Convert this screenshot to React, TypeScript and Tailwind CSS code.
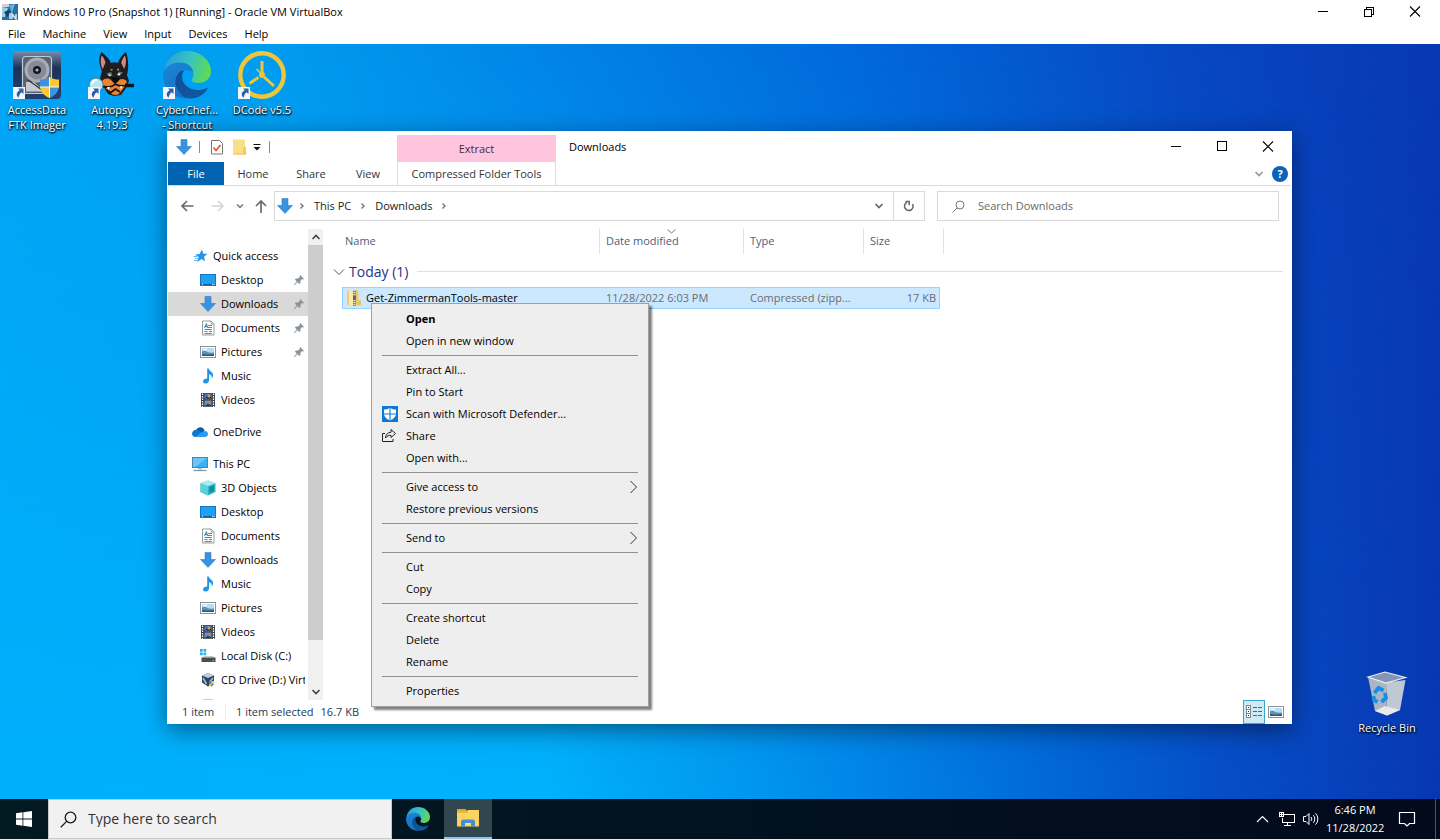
import type { ReactNode } from "react";

type IconProps = { className?: string };

/* ---------- window glyphs ---------- */

function Minimise() {
  return (
    <svg width="12" height="12" viewBox="0 0 12 12" shapeRendering="crispEdges"><path d="M1 5.500h10" stroke="#000" /></svg>
  );
}
function Restore() {
  return (
    <svg width="12" height="12" viewBox="0 0 12 12" fill="none" stroke="#000" shapeRendering="crispEdges">
      <path d="M1.500 3.500h7v7h-7zM3.500 3.500v-2h7v7h-2" />
    </svg>
  );
}
function Maximise() {
  return (
    <svg width="12" height="12" viewBox="0 0 12 12" fill="none" stroke="#000" shapeRendering="crispEdges"><path d="M1.500.500h9v9h-9z" /></svg>
  );
}
function Close() {
  return (
    <svg width="12" height="12" viewBox="0 0 12 12" fill="none" stroke="#000" strokeWidth="1.100"><path d="M1 .5l10 10M11 .5L1 10.500" /></svg>
  );
}
function Chevron({ className = "" }: IconProps) {
  return (
    <svg className={className} width="10" height="10" viewBox="0 0 10 10" fill="none" stroke="currentColor" strokeWidth="1.700"><path d="M1.500 3L5 6.500 8.500 3" /></svg>
  );
}
function Crumb() {
  return (
    <svg width="6" height="8" viewBox="0 0 6 8" fill="none" stroke="#777" strokeWidth="1.400"><path d="M1.500 1.500L4 4 1.500 6.500" /></svg>
  );
}

/* ---------- folder and drive icons ---------- */

function DownArrow() {
  return (
    <svg width="16" height="16" viewBox="0 0 16 16"><path d="M5 .5h6v7h4.500L8 15.500.5 7.500H5z" fill="#3a93e0" stroke="#2d7fc9" strokeWidth=".6" /></svg>
  );
}
function StarIcon() {
  return (
    <svg width="16" height="16" viewBox="0 0 16 16">
      <path d="M10 1.500l1.300 4.200 4.200.100-3.400 2.900 1 4.600L9.500 11 5.200 14l1.500-4.900L3 6.500l4.500-.4z" fill="#2593e6" />
      <path d="M1.500 8.500h4M3 10.500h3M2 12.500h4M4 6.500h3" stroke="#5cb3ee" strokeWidth=".9" />
    </svg>
  );
}
function DesktopIcon() {
  return (
    <svg width="16" height="16" viewBox="0 0 16 16">
      <rect x=".5" y="2.500" width="15" height="11" fill="#1ea0f6" stroke="#1278c4" />
      <path d="M1 12.500h14" stroke="#0b5c9e" />
      <path d="M2 12.500h1.500M12 12.500h2.500" stroke="#cdeafd" strokeDasharray="1 .5" />
    </svg>
  );
}
function DocIcon() {
  return (
    <svg width="16" height="16" viewBox="0 0 16 16">
      <path d="M2.500 1h8.500l3 3v11h-11.500z" fill="#fff" stroke="#8a9299" strokeWidth=".9" />
      <path d="M11 1v3h3" fill="none" stroke="#8a9299" strokeWidth=".8" />
      <path d="M8 5.500h4M8 7.500h4M4.500 9.500h7.500M4.500 11.500h3M9 11.500h3M4.500 13.500h7.500" stroke="#3a92c8" />
      <path d="M4.500 8l2-4.500 1 4.500M5 6.500h2" fill="none" stroke="#2a7fb5" />
    </svg>
  );
}
function PictureIcon() {
  return (
    <svg width="16" height="16" viewBox="0 0 16 16">
      <rect x=".5" y="2.500" width="15" height="11" fill="#fff" stroke="#8b9298" />
      <rect x="2" y="4" width="12" height="8" fill="#b9dcf3" />
      <path d="M2 7.500c2-1.800 3.500-.5 5 .3s4 1 7 .700V12H2z" fill="#5b93bb" />
      <path d="M2 10l5 .5 7-.5V12H2z" fill="#2f5f6d" />
      <path d="M3 5.500h4" stroke="#fff" strokeWidth="1.500" />
    </svg>
  );
}
function MusicIcon() {
  return (
    <svg width="16" height="16" viewBox="0 0 16 16">
      <path d="M7.200.5h1.600c.3 2.600 4 3.200 4.200 6.200.1 1.600-.5 2.900-1.300 3.700.3-2.200-.6-3.800-2.700-4.400v6.200c0 1.800-1.300 3.100-3.200 3.300-1.800.1-2.700-.7-2.700-1.900 0-1.700 1.500-3 4.100-3z" fill="#1c94e8" />
    </svg>
  );
}
function VideoIcon() {
  return (
    <svg width="16" height="16" viewBox="0 0 16 16">
      <rect x="1" y="1" width="14" height="14" fill="#3b4046" />
      <path d="M2.500 1.500v14M13.500 1.500v14" stroke="#fff" strokeWidth="1.300" strokeDasharray="1.400 1.100" />
      <rect x="4.500" y="1.500" width="7" height="6" fill="#4c76b8" />
      <rect x="4.500" y="8.500" width="7" height="6" fill="#6d8fc4" />
      <path d="M5 6.500l2.500-3 1.500 1.500 2-2v4z" fill="#323c52" />
      <circle cx="9" cy="4" r="1.500" fill="#e4a23a" />
      <path d="M5 14l3-3 3.500 3z" fill="#314036" /><circle cx="8.500" cy="10.500" r="1.300" fill="#d48b3a" />
    </svg>
  );
}
function CloudIcon() {
  return (
    <svg width="16" height="16" viewBox="0 0 16 16">
      <path d="M4.300 5.800a4.300 4.300 0 0 1 8.200 1.200L9 9.500 2.500 7z" fill="#0a5ea8" />
      <path d="M0 9.800C0 7.600 1.900 5.700 4.300 5.700c1.500 0 2.700.7 4.200 1.800L13 13H3.300C1.500 13 0 11.600 0 9.800z" fill="#1177d1" />
      <path d="M3 13l7.500-5.300c1-.6 1.800-.8 2.400-.7C14.700 7.100 16 8.400 16 10s-1.300 3-2.900 3z" fill="#2a9df0" />
    </svg>
  );
}
function ComputerIcon() {
  return (
    <svg width="16" height="16" viewBox="0 0 16 16">
      <rect x=".5" y="1.500" width="15" height="10" fill="#3bb0f2" stroke="#4b84a8" />
      <path d="M1 2h14L3 11H1z" fill="#7dd0fa" opacity=".7" />
      <path d="M6 12h4v1.500H6z" fill="#b5c3cc" /><path d="M1.500 14.500h13" stroke="#7795a8" strokeWidth="1.200" />
    </svg>
  );
}
function CubeIcon() {
  return (
    <svg width="16" height="16" viewBox="0 0 16 16">
      <path d="M8 .5l7.500 2.800V12L8 15.500.5 12V3.300z" fill="#2fb4c6" />
      <path d="M.5 3.300L8 6v9.500L.5 12z" fill="#5ad0da" /><path d="M8 .5l7.500 2.800L8 6 .5 3.300z" fill="#a8ecef" />
      <path d="M9.500 7l4.500-1.800v5.500L9.500 13z" fill="#148a9d" />
    </svg>
  );
}
function DiskIcon() {
  return (
    <svg width="16" height="16" viewBox="0 0 16 16">
      <path d="M0 1h2.700v2.700H0zM3.500 1h2.700v2.700H3.500zM0 4.500h2.700v2.700H0zM3.500 4.500h2.700v2.700H3.500z" fill="#25b4e8" />
      <path d="M2 9.500L4 8h9l2 1.500z" fill="#c5c9cc" /><rect x="1.500" y="9.500" width="14" height="4.500" fill="#4a4e52" />
      <path d="M12.500 12.500h1.500" stroke="#6fe06f" />
    </svg>
  );
}
function CdIcon() {
  return (
    <svg width="16" height="16" viewBox="0 0 16 16">
      <path d="M8 1l6 2.500v7L8 14.500 2 10.500v-7z" fill="#274768" />
      <path d="M2 3.500L8 6l6-2.500L8 1z" fill="#c3d0dc" /><path d="M3 6l3.500 6M13 6l-3.500 4" stroke="#aebfd0" strokeWidth="1.500" />
      <path d="M9 9h5v3l-2.500 3L9 13z" fill="#f4cc3f" /><path d="M9 9h2.500v3H9zM11.500 12H14l-2.500 3z" fill="#4783cc" />
    </svg>
  );
}
function SliceIcon() {
  return <svg width="16" height="16" viewBox="0 0 16 16"><path d="M3 3h10l2 5v5H1V8z" fill="#c9ccce" /></svg>;
}
function PinIcon() {
  return (
    <svg width="12" height="12" viewBox="0 0 12 12">
      <path d="M7.200 1l3.900 3.900-1 .5-.9-.3-1.800 1.900.1 2.200-1 .9L4.600 8.300 1.300 11.200l-.5-.5 2.900-3.300L1.900 5.500l.9-1L5 4.600l1.900-1.800-.3-.9z" fill="#8b949c" />
    </svg>
  );
}
function ZipIcon() {
  return (
    <svg width="16" height="16" viewBox="0 0 16 16">
      <path d="M1.500 .5h8v15h-8z" fill="#fbe9a4" /><path d="M9 .5h3.500v10h2v5H9z" fill="#f0c95c" /><path d="M2 1v14M14 10v5" stroke="#e0b648" />
      <path d="M8.500 0v16" stroke="#8a8a8a" strokeWidth="3" /><path d="M8.500 0v16" stroke="#e4e4e4" strokeWidth="1.800" strokeDasharray="1 1" /><path d="M7 6h3v4H7z" fill="#666" />
    </svg>
  );
}

/* ---------- large icons ---------- */

function EdgeIcon({ className = "" }: IconProps) {
  return (
    <svg className={className} viewBox="0 0 48 48">
      <defs>
        <linearGradient id="edge-top" x1="0" y1=".4" x2="1" y2=".6"><stop offset="0" stopColor="#2b9fd9" /><stop offset=".5" stopColor="#36c3c4" /><stop offset="1" stopColor="#62dc4c" /></linearGradient>
        <linearGradient id="edge-mid" x1="0" y1="0" x2=".3" y2="1"><stop offset="0" stopColor="#1b86d6" /><stop offset="1" stopColor="#1673c7" /></linearGradient>
        <linearGradient id="edge-low" x1="0" y1="0" x2="1" y2="1"><stop offset="0" stopColor="#0f4f96" /><stop offset="1" stopColor="#12589f" /></linearGradient>
      </defs>
      <path d="M1 20C3 8 12 0 24 0c14 0 24 10 24 20 0 7.500-5.500 12-12.500 12-4 0-7-1.200-7-2.800 0-1.400 1.900-2 1.900-5.200 0-4-4.600-8.500-12-8.500C10 15.500 4 18 1 20z" fill="url(#edge-top)" />
      <path d="M0 24c0-7 8-12.500 17-12.500 8 0 13 4.500 13.400 11C27 17.500 19 18 15.500 24c-4 7-1 16 4 20 1.500 1.300 3.500 2.500 5.500 3.500C11 48 0 37.500 0 24z" fill="url(#edge-mid)" />
      <path d="M19 19.500c-6 3-8.500 11-5 18 3 6 8 10 14 10 7 0 13-4 16.500-9.500.5-.9-.3-1.500-1-1-2.500 1.400-5.500 2-8.500 2-9 0-16-6-16-13 0-2.500.8-4.800 2-6z" fill="url(#edge-low)" />
    </svg>
  );
}
function FtkIcon() {
  return (
    <svg className="size-12" viewBox="0 0 48 48">
      <defs><linearGradient id="ftk-bg" x1="0" y1="0" x2="0" y2="1"><stop offset="0" stopColor="#7b8ea9" /><stop offset=".35" stopColor="#1d3259" /><stop offset="1" stopColor="#223f70" /></linearGradient></defs>
      <rect x="0" y="0" width="48" height="48" rx="4" fill="url(#ftk-bg)" />
      <rect x="9.500" y="5.500" width="29" height="37" rx="3" fill="#5c636e" stroke="#b9ced9" strokeWidth="1.200" />
      <circle cx="24" cy="19" r="12.500" fill="#a9aeb6" /><circle cx="24" cy="19" r="9.500" fill="#868c96" />
      <circle cx="24" cy="19" r="4" fill="#15181d" /><circle cx="24" cy="19" r="1.600" fill="#aab" />
      <path d="M13 31h8l10 9.500H13z" fill="#c7cace" /><path d="M15 29l14 10" stroke="#33373d" strokeWidth="1.200" />
      <path d="M36.500 26c-3 2-6 2.500-9.500 2.500v7.500h9.500z" fill="#3c92dc" />
      <path d="M36.500 26c3 2 6 2.500 9.500 2.500v7.500h-9.500z" fill="#fbc937" />
      <path d="M27 36h9.500v11c-5-2-9-6-9.500-11z" fill="#fbc937" />
      <path d="M46 36h-9.500v11c5-2 9-6 9.500-11z" fill="#3c92dc" />
      <path d="M36.500 26v21M27 36h19" stroke="#f2f6fa" strokeWidth="1" />
    </svg>
  );
}
function AutopsyIcon() {
  return (
    <svg className="size-12" viewBox="0 0 48 48">
      <path d="M13.500 1C10.500 6 10.500 12 14 20l-2 7 3 8 5 8 6 2 7-1 5-7 3-7-2-6c2-7 1.500-16-1-23-4 3-7 7-8 11-2-1-5-1-7 0C21.500 8 17.500 4 13.500 1z" fill="#1c1d20" />
      <path d="M13.800 4.500c-1.800 4-1.300 9.500 1 13.500l2.700-6.500c-.8-3-2-5.200-3.700-7zM37 4.500c1.500 4 1.300 9-.8 13.500l-3-6c.8-3 2-5.500 3.800-7.500z" fill="#d9847c" />
      <path d="M18.500 22.500L23 21l1.500 3.500-3 1zM35 21.500L31 20.500l-2.500 3.500 3 1z" fill="#6c727d" />
      <path d="M20.500 24l2 .300M32 23l-2 .500" stroke="#fff" strokeWidth="1.300" />
      <path d="M22.500 18.500l2 .500M29 19l2-.700" stroke="#e47f2b" strokeWidth="1.500" />
      <path d="M14 30c3-3 6-3 9-1l4 4 4-4c3-2 6-1 8 1.500l-3 6-5 6.500c-4 2-8 1-9-3L14 35z" fill="#e88330" />
      <path d="M23.500 26.500h8L30.500 30l-3 2.500-3-2z" fill="#0c0c0e" />
      <path d="M15 35.500c5 1 9 1 12-2.500 3 2 6 2.500 10 1.500M22 42l5.500-4 4.500 3" fill="none" stroke="#1a1210" strokeWidth="1.800" />
      <path d="M19 36l1.500 3 1.500-3zM32 35.500l1 3 1.500-3.500z" fill="#fff" />
      <path d="M37 34.500h9" stroke="#101522" strokeWidth="3.500" />
      <circle cx="8" cy="34" r="7" fill="#b8e6f4" stroke="#55778a" /><path d="M4 33a4.500 4.500 0 0 1 5-4" stroke="#fff" strokeWidth="2" fill="none" />
    </svg>
  );
}
function DcodeIcon() {
  return (
    <svg className="size-12" viewBox="0 0 48 48" fill="none" stroke="#edc63a">
      <circle cx="24" cy="24" r="21.700" strokeWidth="4.400" /><circle cx="24" cy="24" r="3" fill="#edc63a" stroke="none" />
      <path d="M24 10v12M11.500 32.500l9-6M26 26l10 9" strokeWidth="3" /><path d="M24.500 24l-6-6" strokeWidth="1.500" />
    </svg>
  );
}
function RecycleIcon() {
  return (
    <svg className="size-12" viewBox="0 0 48 48">
      <path d="M5 8l7 34 12 4.500-1-33z" fill="#aab6c5" /><path d="M23 13.500l1 33L37 41l5.500-30z" fill="#c0c8d2" />
      <path d="M5 8l17-5 20.500 5.500L23 14z" fill="#8496b4" stroke="#e9edf2" strokeWidth="1.200" />
      <path d="M12 42l10-5 15 4-13 5.500z" fill="#e9e9e9" />
      <g fill="none" stroke="#188de4" strokeWidth="3.800"><path d="M11.500 24l4-5 5 2.500M22 24l1 5-4.500 4M14.500 33l-3.500-2-.5-4" /></g>
    </svg>
  );
}
function ShortcutArrow() {
  return (
    <svg className="absolute bottom-0 left-0" width="12" height="12" viewBox="0 0 12 12">
      <rect width="12" height="12" fill="#f4f6f8" /><path d="M5 1.500h5.500V7L8.700 5.200C6.800 6.600 6.300 8 5.500 10.800 2.800 8 3.300 5.200 6.800 3.300z" fill="#2b5fae" />
    </svg>
  );
}

/* ---------- desktop ---------- */

function DesktopItem({ label, children, shortcut = true }: { label: string[]; children: ReactNode; shortcut?: boolean }) {
  return (
    <button className="flex w-[74px] flex-col items-center gap-[3px] text-white">
      <span className="relative block size-12">
        {children}
        {shortcut && <ShortcutArrow />}
      </span>
      <span className="block text-center text-[11px] leading-[15px] whitespace-nowrap [text-shadow:1px_1px_2px_#000,0_1px_2px_#000]">
        {label.map((l) => (
          <span key={l} className="block">{l}</span>
        ))}
      </span>
    </button>
  );
}

type NavEntry = { label: string; icon: ReactNode; root?: boolean; pinned?: boolean; active?: boolean; gap?: boolean };

const places: NavEntry[] = [
  { label: "Quick access", icon: <StarIcon />, root: true },
  { label: "Desktop", icon: <DesktopIcon />, pinned: true },
  { label: "Downloads", icon: <DownArrow />, pinned: true, active: true },
  { label: "Documents", icon: <DocIcon />, pinned: true },
  { label: "Pictures", icon: <PictureIcon />, pinned: true },
  { label: "Music", icon: <MusicIcon /> },
  { label: "Videos", icon: <VideoIcon /> },
  { label: "OneDrive", icon: <CloudIcon />, root: true, gap: true },
  { label: "This PC", icon: <ComputerIcon />, root: true, gap: true },
  { label: "3D Objects", icon: <CubeIcon /> },
  { label: "Desktop", icon: <DesktopIcon /> },
  { label: "Documents", icon: <DocIcon /> },
  { label: "Downloads", icon: <DownArrow /> },
  { label: "Music", icon: <MusicIcon /> },
  { label: "Pictures", icon: <PictureIcon /> },
  { label: "Videos", icon: <VideoIcon /> },
  { label: "Local Disk (C:)", icon: <DiskIcon /> },
  { label: "CD Drive (D:) VirtualBox", icon: <CdIcon /> },
  { label: "E: DRIVE SLAVE", icon: <SliceIcon /> },
];

function NavPane() {
  return (
    <nav className="min-w-0 flex-1 overflow-hidden pt-4">
      <ul>
        {places.map((p, i) => (
          <li key={i} className={p.gap ? "mt-2" : ""}>
            <a
              href="#"
              className={`flex h-6 items-center gap-[5px] pr-[3px] whitespace-nowrap ${p.root ? "pl-6" : "pl-8"} ${p.active ? "bg-[#d9d9d9]" : ""}`}
            >
              <span className="shrink-0">{p.icon}</span>
              <span className="min-w-0 flex-1 overflow-hidden">{p.label}</span>
              {p.pinned && <PinIcon />}
            </a>
          </li>
        ))}
      </ul>
    </nav>
  );
}

function ScrollBar() {
  return (
    <div className="mt-px flex w-[15px] shrink-0 flex-col bg-[#f0f0f0] text-[#444]">
      <button aria-label="Scroll up" className="flex h-4 items-center justify-center"><Chevron className="rotate-180" /></button>
      <div className="min-h-0 flex-1"><div className="h-9/10 bg-[#cdcdcd]" /></div>
      <button aria-label="Scroll down" className="flex h-4 items-center justify-center"><Chevron /></button>
    </div>
  );
}

/* ---------- context menu ---------- */

function DefenderIcon() {
  return (
    <svg width="16" height="16" viewBox="0 0 16 16">
      <rect width="16" height="16" fill="#0f78d4" /><path d="M8 1.800c1.800 1.300 3.700 1.800 6 1.800v4c0 3.200-2.500 5.400-6 7-3.500-1.600-6-3.800-6-7v-4c2.300 0 4.200-.5 6-1.800z" fill="#fff" />
      <path d="M8 1v14M1 8h14" stroke="#0f78d4" strokeWidth="1.100" />
    </svg>
  );
}
function ShareIcon() {
  return (
    <svg width="16" height="16" viewBox="0 0 16 16" fill="none" stroke="#222">
      <path d="M3 5.500H.5v8h10.500V11" /><path d="M9 1.500l4.500 4L9 9.500V7.300C6.500 7.200 4.800 8.200 3.500 10c.3-3.500 2.200-5.600 5.500-5.800z" strokeLinejoin="round" />
    </svg>
  );
}

type MenuEntry = { label: string; bold?: boolean; icon?: ReactNode; sub?: boolean };
const menuGroups: MenuEntry[][] = [
  [{ label: "Open", bold: true }, { label: "Open in new window" }],
  [
    { label: "Extract All..." },
    { label: "Pin to Start" },
    { label: "Scan with Microsoft Defender...", icon: <DefenderIcon /> },
    { label: "Share", icon: <ShareIcon /> },
    { label: "Open with..." },
  ],
  [{ label: "Give access to", sub: true }, { label: "Restore previous versions" }],
  [{ label: "Send to", sub: true }],
  [{ label: "Cut" }, { label: "Copy" }],
  [{ label: "Create shortcut" }, { label: "Delete" }, { label: "Rename" }],
  [{ label: "Properties" }],
];

function ContextMenu() {
  return (
    <div role="menu" className="absolute top-[172px] left-[203px] w-[278px] border border-[#a0a0a0] bg-[#eeeeee] px-[10px] py-1 text-black shadow-[3px_3px_2px_rgba(0,0,0,0.5)]">
      {menuGroups.map((group, i) => (
        <div key={i} className={i ? "mt-[3px] border-t border-[#919191] pt-[3px]" : ""}>
          {group.map((m) => (
            <button key={m.label} role="menuitem" className={`flex h-[22px] w-full items-center gap-2 text-left ${m.bold ? "font-bold" : ""}`}>
              <span className="size-4 shrink-0">{m.icon}</span>
              <span className="flex-1">{m.label}</span>
              {m.sub && (
                <svg width="8" height="14" viewBox="0 0 8 14" fill="none" stroke="#333"><path d="M.5 1l6 6-6 6" /></svg>
              )}
            </button>
          ))}
        </div>
      ))}
    </div>
  );
}

/* ---------- explorer window ---------- */

function TitleBar() {
  return (
    <div className="flex h-[31px]">
      <div className="flex w-[229px] items-center pl-2">
        <DownArrow />
        <span className="ml-[7px] h-3 w-px bg-[#8a8a8a]" />
        <svg className="ml-[9px]" width="16" height="16" viewBox="0 0 16 16">
          <path d="M2.500 1.500h8l3 3v10.500h-11z" fill="#fff" stroke="#777" /><path d="M4.500 8.500l2.500 3 4.500-5.500" fill="none" stroke="#e0502b" strokeWidth="1.600" />
        </svg>
        <svg className="ml-[7px]" width="16" height="16" viewBox="0 0 16 16">
          <path d="M1 .5h12v15H1z" fill="#fbdf86" /><path d="M11 8h3v7.500h-3z" fill="#f4cd62" /><path d="M1 15h13" stroke="#edc55a" />
        </svg>
        <svg className="ml-[5px]" width="8" height="8" viewBox="0 0 8 8"><path d="M.5 1.500h7" stroke="#111" /><path d="M.5 4h7L4 7.500z" fill="#111" /></svg>
        <span className="ml-2 h-3 w-px bg-[#8a8a8a]" />
      </div>
      <div className="mt-1 flex w-[159px] items-center justify-center bg-[#ffc4de] text-[#4c2a3a]">Extract</div>
      <h1 className="flex-1 self-center pl-[13px] text-black">Downloads</h1>
      <button aria-label="Minimise" className="flex w-[46px] items-center justify-center"><Minimise /></button>
      <button aria-label="Maximise" className="flex w-[46px] items-center justify-center"><Maximise /></button>
      <button aria-label="Close" className="flex w-[46px] items-center justify-center"><Close /></button>
    </div>
  );
}

function RibbonTabs() {
  return (
    <div className="flex h-6 items-stretch border-b border-[#dcdcdc] text-[#333]">
      <button className="w-14 bg-[#0063b1] text-white">File</button>
      <button className="w-[58px]">Home</button>
      <button className="w-[58px]">Share</button>
      <button className="mr-px w-14">View</button>
      <button className="w-[159px] border-x border-[#dcdcdc]">Compressed Folder Tools</button>
      <div className="flex flex-1 items-center justify-end gap-2 pr-[3px] text-[#999]">
        <Chevron />
        <button aria-label="Help" className="flex size-4 items-center justify-center rounded-full bg-[#0b62b8] text-[11px] font-bold text-white">?</button>
      </div>
    </div>
  );
}

function AddressRow() {
  return (
    <div className="mb-[2px] flex h-10 items-center px-3 text-[#222]">
      <button aria-label="Back" className="w-[15px]">
        <svg width="15" height="14" viewBox="0 0 15 14" fill="none" stroke="#6b6b6b" strokeWidth="1.700"><path d="M13.500 7H2M7 2L2 7l5 5" /></svg>
      </button>
      <button aria-label="Forward" className="ml-[15px] w-[15px]">
        <svg width="15" height="14" viewBox="0 0 15 14" fill="none" stroke="#d5d5d5" strokeWidth="1.500"><path d="M1.500 7H13M8 2l5 5-5 5" /></svg>
      </button>
      <button aria-label="Recent locations" className="ml-[11px] text-[#777]"><svg width="8" height="8" viewBox="0 0 8 8" fill="none" stroke="currentColor" strokeWidth="1.500"><path d="M1 2.500l3 3 3-3" /></svg></button>
      <button aria-label="Up" className="ml-[10px] w-[15px]">
        <svg width="14" height="15" viewBox="0 0 14 15" fill="none" stroke="#6b6b6b" strokeWidth="1.700"><path d="M7 14V2M2 7l5-5 5 5" /></svg>
      </button>
      <div className="ml-[5px] flex h-[30px] flex-1 items-center border border-[#d9d9d9] pl-[2px]">
        <DownArrow />
        <span className="ml-[6px] mr-[9px]"><Crumb /></span>
        <a href="#">This PC</a>
        <span className="mx-[9px]"><Crumb /></span>
        <a href="#">Downloads</a>
        <span className="mx-2"><Crumb /></span>
        <span className="flex-1" />
        <button aria-label="Previous locations" className="flex h-full w-[30px] items-center justify-center border-r border-[#d9d9d9] text-[#666]"><Chevron /></button>
        <button aria-label="Refresh" className="flex w-[30px] items-center justify-center">
          <svg width="12" height="12" viewBox="0 0 12 12" fill="none" stroke="#666" strokeWidth="1.500"><path d="M4 2.300A4.300 4.300 0 1 0 9.500 4" /><path d="M2.500 1.500h3.700v3.700" /></svg>
        </button>
      </div>
      <label className="ml-3 flex h-[30px] w-[342px] items-center gap-[13px] border border-[#d9d9d9] pl-[14px]">
        <svg width="13" height="13" viewBox="0 0 13 13" fill="none" stroke="#777"><circle cx="8" cy="5" r="4" /><path d="M5 8L.5 12.500" /></svg>
        <input type="search" aria-label="Search Downloads" placeholder="Search Downloads" className="min-w-0 flex-1 outline-none placeholder:text-[#6a6a6a]" />
      </label>
    </div>
  );
}

function FileList() {
  const head = "border-r border-[#e3e3e3] p-0 text-left font-normal text-[#4c607a]";
  const cell = "border-y border-[#99d1ff] bg-[#cce8ff] p-0";
  return (
    <div className="min-w-0 flex-1 pr-2 pl-[10px]">
      <table className="w-full table-fixed border-separate border-spacing-0">
        <colgroup>
          <col className="w-[9px]" />
          <col className="w-[258px]" />
          <col className="w-[144px]" />
          <col className="w-[120px]" />
          <col className="w-[76px]" />
          <col />
        </colgroup>
        <thead>
          <tr className="h-[26px]">
            <td className="p-0" />
            <th className={head}><span className="pl-[3px]">Name</span></th>
            <th className={head}>
              <span className="relative block pl-[6px]">
                Date modified
                <svg className="absolute -top-1 left-[67px]" width="9" height="5" viewBox="0 0 9 5" fill="none" stroke="#777"><path d="M.5.500l4 3.500 4-3.500" /></svg>
              </span>
            </th>
            <th className={head}><span className="pl-[6px]">Type</span></th>
            <th className="p-0 text-left font-normal text-[#4c607a]"><span className="pl-[6px]">Size</span></th>
            <td className="p-0"><div className="h-[26px] w-1 border-r border-[#e3e3e3]" /></td>
          </tr>
        </thead>
        <tbody>
          <tr className="h-[33px]">
            <th colSpan={6} className="p-0 pt-[2px] font-normal">
              <div className="flex items-center">
                <svg className="mr-1" width="12" height="8" viewBox="0 0 12 8" fill="none" stroke="#555"><path d="M1 1.500l5 5 5-5" /></svg>
                <span className="text-[14px] leading-5 text-[#1e3287]">Today (1)</span>
                <span className="ml-[9px] h-px flex-1 bg-[#e0e0e0]" />
              </div>
            </th>
          </tr>
          <tr className="h-[22px] text-[#6d6d6d]">
            <td className="p-0" />
            <td className={`${cell} border-l text-black`}>
              <span className="flex items-center gap-1 pl-[3px]"><ZipIcon />Get-ZimmermanTools-master</span>
            </td>
            <td className={`${cell} pl-[6px]`}>11/28/2022 6:03 PM</td>
            <td className={`${cell} pl-[6px]`}>Compressed (zipp...</td>
            <td className={`${cell} border-r pr-[3px] text-right`}>17 KB</td>
            <td className="p-0" />
          </tr>
        </tbody>
      </table>
    </div>
  );
}

function StatusBar() {
  return (
    <div className="flex h-6 items-center pr-[7px] pl-[14px] text-[#1e395b]">
      <span className="w-[43px]">1 item</span>
      <span className="h-4 w-px bg-[#f0f0f0]" />
      <span className="ml-[10px]">1 item selected</span>
      <span className="ml-[7px] flex-1">16.7 KB</span>
      <button aria-label="Details view" className="flex h-6 w-[22px] items-center justify-center border border-[#3ca5cc] bg-[#cdeaf5]">
        <svg width="16" height="14" viewBox="0 0 16 14" fill="none" shapeRendering="crispEdges">
          <path d="M.5.500h4v12h-4zM.5 4.500h4M.5 8.500h4" stroke="#7d8a92" fill="#fff" /><path d="M2 2.500h1M2 6.500h1M2 10.500h1" stroke="#333" />
          <path d="M6.500 2.500h4M12 2.500h4M6.500 6.500h4M12 6.500h4M6.500 10.500h4M12 10.500h4" stroke="#56646c" />
        </svg>
      </button>
      <button aria-label="Large icons view" className="ml-[3px]"><PictureIcon /></button>
    </div>
  );
}

function Explorer() {
  return (
    <section className="absolute top-[87px] right-[148px] bottom-[75px] left-[167px] flex flex-col border-x border-white bg-white text-black shadow-[0_6px_22px_rgba(0,0,0,0.45)]">
      <TitleBar />
      <RibbonTabs />
      <AddressRow />
      <div className="flex min-h-0 flex-1">
        <div className="flex w-[155px] shrink-0 overflow-hidden"><NavPane /><ScrollBar /></div>
        <FileList />
      </div>
      <StatusBar />
      <ContextMenu />
    </section>
  );
}

/* ---------- taskbar ---------- */

function Taskbar() {
  return (
    <footer className="flex h-[41px] shrink-0 items-stretch border-b border-[#e8e8e8] bg-linear-to-r from-[#021a22] to-[#020a1c] text-white">
      <button aria-label="Start" className="flex w-12 items-center justify-center">
        <svg width="16" height="16" viewBox="0 0 16 16" fill="#fff"><path d="M0 2.200l6.500-.9v6.200H0zM7.300 1.200L16 0v7.500H7.300zM0 8.400h6.500v6.300L0 13.800zM7.300 8.400H16V16l-8.700-1.200z" /></svg>
      </button>
      <label className="flex w-[344px] items-center gap-[11px] border border-[#c8c8c8] bg-[#f1f1f1] pl-[11px] text-black">
        <svg width="17" height="17" viewBox="0 0 17 17" fill="none" stroke="#1a1a1a" strokeWidth="1.300"><circle cx="10.500" cy="6.500" r="5.300" /><path d="M6.600 10.400L.8 16.200" /></svg>
        <input type="search" aria-label="Type here to search" placeholder="Type here to search" className="min-w-0 flex-1 text-[14px] outline-none placeholder:text-[#333]" />
      </label>
      <button aria-label="Microsoft Edge" className="flex w-[52px] items-center justify-center"><EdgeIcon className="size-6" /></button>
      <button aria-label="File Explorer" className="flex w-12 items-center justify-center border-b-2 border-[#8fc4ee] bg-[#31474f]">
        <svg width="22" height="18" viewBox="0 0 22 18">
          <path d="M0 0h8.500l1.500 2H0z" fill="#e8a524" /><path d="M0 2h10l.8-1H22v16.500H0z" fill="#fcd462" /><path d="M0 2h10l.8-.5V4H0z" fill="#f4b83c" />
          <path d="M4 17.500V12l1.500-1.500h11L18 12v5.500h-4V14H8v3.500z" fill="#3f90d4" /><path d="M9 14h4v1.500H9z" fill="#fbe29a" />
        </svg>
      </button>
      <div className="flex flex-1 items-center justify-end">
        <button aria-label="Show hidden icons" className="mr-[10px]">
          <svg width="13" height="8" viewBox="0 0 13 8" fill="none" stroke="#fff" strokeWidth="1.200"><path d="M1 7l5.500-5.500L12 7" /></svg>
        </button>
        <button aria-label="Network" className="mr-2">
          <svg width="16" height="14" viewBox="0 0 16 14" fill="none" stroke="#fff" shapeRendering="crispEdges"><path d="M5 2.500h10.500v8H3.500V5.500M8.500 10.500v3M5 13.500h7" /><path d="M.5.500h4v4h-4zM2.500 1v3.500M.5 2.500h4" /></svg>
        </button>
        <button aria-label="Volume" className="mr-[7px]">
          <svg width="16" height="14" viewBox="0 0 16 14" fill="none" stroke="#fff"><path d="M.5 4.500H3L6 1.500v11L3 9.500H.5zM8 5a3 3 0 0 1 0 4M10.300 3.200a5.500 5.500 0 0 1 0 7.600M12.500 1.300a8 8 0 0 1 0 11.400" /></svg>
        </button>
        <button className="w-[58px] text-center leading-[18px]">
          <span className="block">6:46 PM</span>
          <span className="block">11/28/2022</span>
        </button>
        <button aria-label="Notifications" className="mr-[19px] ml-[14px]">
          <svg width="18" height="17" viewBox="0 0 18 17" fill="none" stroke="#fff" strokeWidth="1.200"><path d="M1.500 1.500h15v11h-5L9 15l-2.500-2.500h-5z" /></svg>
        </button>
        <span className="mr-1 w-px self-stretch bg-[#4d5660]" />
      </div>
    </footer>
  );
}

/* ---------- host window ---------- */

export default function App() {
  return (
    <div className="flex h-screen flex-col bg-white font-['Open_Sans',sans-serif] text-[11px] leading-4">
      <header className="shrink-0 text-black">
        <div className="flex h-6 items-center px-[2px]">
          <svg width="16" height="16" viewBox="0 0 16 16">
            <rect width="16" height="16" fill="#2a6f9f" /><path d="M0 0h7v3H0z" fill="#d8cfd0" /><path d="M0 3l6 1-3 9H0z" fill="#8fd0ea" />
            <path d="M7 1l6-1-3 9z" fill="#5cb4e0" /><path d="M2 8l5-2 2 3-4 4z" fill="#1b3f66" /><path d="M8 15V9M10 15v-5l4 5v-5" stroke="#d5ecf6" strokeWidth="1.500" fill="none" />
          </svg>
          <span className="flex-1 pl-[5px]">Windows 10 Pro (Snapshot 1) [Running] - Oracle VM VirtualBox</span>
          <div className="flex self-stretch">
            <button aria-label="Minimise" className="flex w-[46px] items-center justify-center"><Minimise /></button>
            <button aria-label="Restore" className="flex w-[46px] items-center justify-center"><Restore /></button>
            <button aria-label="Close" className="flex w-[46px] items-center justify-center"><Close /></button>
          </div>
        </div>
        <nav className="flex h-5 items-center gap-px">
          {["File", "Machine", "View", "Input", "Devices", "Help"].map((m) => (
            <button key={m} className="px-2">{m}</button>
          ))}
        </nav>
      </header>

      <main className="relative min-h-0 flex-1 overflow-hidden bg-[linear-gradient(to_right,#00b0fc_0%,#00b2fc_38%,#0098f0_52%,#0074de_68%,#0650c8_84%,#0838b2_100%)]">
        <div className="absolute inset-0 bg-[linear-gradient(to_right,#00a4f4_0%,#009cf0_18%,#0084e6_38%,#0068da_60%,#0748c2_82%,#0838b2_100%)] [mask-image:linear-gradient(to_bottom,black,transparent)]" />
        <div className="absolute top-[7px] left-0 flex items-start gap-px">
          <DesktopItem label={["AccessData", "FTK Imager"]}><FtkIcon /></DesktopItem>
          <DesktopItem label={["Autopsy", "4.19.3"]}><AutopsyIcon /></DesktopItem>
          <DesktopItem label={["CyberChef...", "- Shortcut"]}><EdgeIcon className="size-12" /></DesktopItem>
          <DesktopItem label={["DCode v5.5"]}><DcodeIcon /></DesktopItem>
        </div>
        <div className="absolute right-4 bottom-16">
          <DesktopItem label={["Recycle Bin"]} shortcut={false}><RecycleIcon /></DesktopItem>
        </div>
        <Explorer />
      </main>

      <Taskbar />
    </div>
  );
}
